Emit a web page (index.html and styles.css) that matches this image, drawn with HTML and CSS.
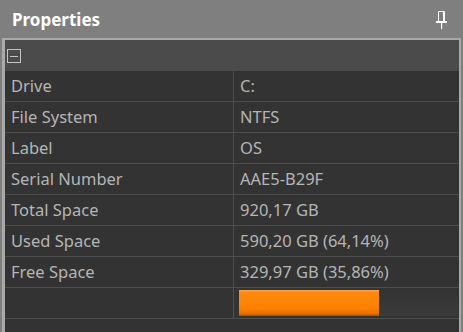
FILE: index.html
```html
<!DOCTYPE html>
<html lang="en">
<head>
    <meta charset="UTF-8">
    <meta name="viewport" content="width=device-width, initial-scale=1.0">
    <title>Properties</title>
    <link rel="stylesheet" href="styles.css">
</head>
<body>

    <div class="title-bar">
        <span class="title">Properties</span>
        <svg class="pin" width="11" height="18" viewBox="0 0 11 18">
            <path d="M2.5 0.5 H8.5 V10 M2.5 0.5 V10" fill="none" stroke="#fff" stroke-width="1"/>
            <rect x="7" y="1" width="1.5" height="9" fill="#fff"/>
            <rect x="0" y="10" width="11" height="2" fill="#fff"/>
            <rect x="5" y="12" width="1.2" height="6" fill="#fff"/>
        </svg>
    </div>

    <div class="props">
        <div class="category">
            <span class="toggle"></span>
        </div>

        <div class="row"><div class="name">Drive</div><div class="value">C:</div></div>
        <div class="row"><div class="name">File System</div><div class="value">NTFS</div></div>
        <div class="row"><div class="name">Label</div><div class="value">OS</div></div>
        <div class="row"><div class="name">Serial Number</div><div class="value">AAE5-B29F</div></div>
        <div class="row"><div class="name">Total Space</div><div class="value">920,17 GB</div></div>
        <div class="row"><div class="name">Used Space</div><div class="value">590,20 GB (64,14%)</div></div>
        <div class="row"><div class="name">Free Space</div><div class="value">329,97 GB (35,86%)</div></div>
        <div class="row">
            <div class="name"></div>
            <div class="value">
                <div class="track"><div class="fill" style="width: 64.14%"></div></div>
            </div>
        </div>
    </div>

</body>
</html>
```

FILE: styles.css
```css
body {
    margin: 0;
    background-color: #7f7f7f;
    font-family: "Noto Sans", "Open Sans", sans-serif;
    height: 332px;
    overflow: hidden;
    display: flex;
    flex-direction: column;
}

.title-bar {
    height: 38px;
    display: flex;
    align-items: center;
    justify-content: space-between;
    padding: 0 16px 0 12px;
    flex-shrink: 0;
}

.title {
    color: #fff;
    font-weight: bold;
    font-size: 17px;
}

.pin {
    display: block;
    margin-top: 2px;
}

.props {
    flex: 1;
    margin: 0 2px;
    background-color: #333;
    border-top: 2px solid #a9a9a9;
    border-left: 3px solid #a9a9a9;
    border-right: 2px solid #a9a9a9;
}

.category {
    height: 31px;
    background-color: #4b4b4b;
    display: flex;
    align-items: center;
    padding-left: 2px;
}

.toggle {
    width: 12px;
    height: 12px;
    border: 1px solid #c4c4c4;
    position: relative;
}

.toggle::after {
    content: "";
    position: absolute;
    left: 2px;
    right: 2px;
    top: 6px;
    height: 1px;
    background-color: #c4c4c4;
}

.row {
    display: grid;
    grid-template-columns: 229px 1fr;
    height: 30px;
    border-bottom: 1px solid #4e4e4e;
    color: #b5b5b5;
    font-size: 16.5px;
}

.name {
    border-right: 1px solid #4e4e4e;
    padding-left: 6px;
    line-height: 30px;
}

.value {
    padding-left: 6px;
    line-height: 30px;
}

.track {
    margin: 2px 1px 2px -1px;
    height: 26px;
    background: linear-gradient(to bottom, #333, #3b3b3b);
}

.fill {
    height: 100%;
    background: linear-gradient(to bottom, #ffa850 0, #ff8a10 2px, #ff8000 70%, #e87000 90%, #a85200 100%);
}
```
